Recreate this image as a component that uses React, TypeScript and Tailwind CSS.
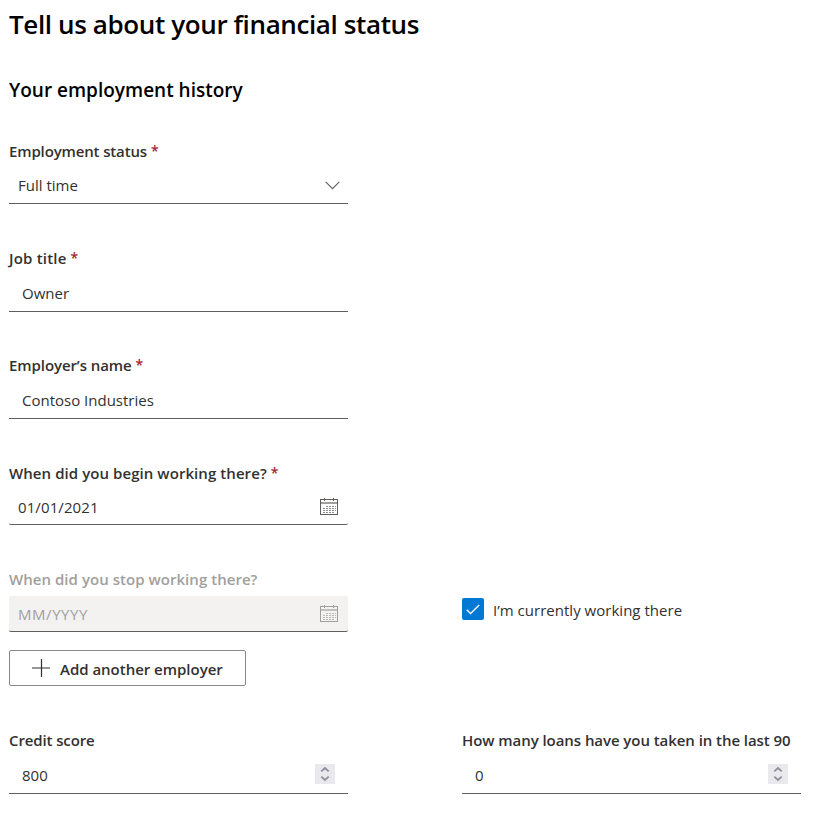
import React from "react";

function Label({ children, required, muted, className = "" }: { children: React.ReactNode; required?: boolean; muted?: boolean; className?: string }) {
  return (
    <div className={`flex h-5 items-center whitespace-nowrap text-[15px] leading-5 font-semibold ${muted ? "text-[#a19f9d]" : "text-[#323130]"}`}>
      <span className={className}>{children}</span>
      {required && <span className="ml-1 text-[14px] text-[#a4262c]">*</span>}
    </div>
  );
}

function Field({ children, className = "", text = "" }: { children: React.ReactNode; className?: string; text?: string }) {
  return (
    <div className={`flex w-[339px] items-center justify-between border-b border-[#605e5c] text-[15px] leading-5 text-[#323130] ${className}`}>
      {React.Children.map(children, (child, i) => (i === 0 ? <span className={`whitespace-nowrap ${text}`}>{child}</span> : child))}
    </div>
  );
}

function Calendar({ color }: { color: string }) {
  return (
    <svg width="20" height="18" viewBox="0 0 20 18" fill="none" stroke={color} shapeRendering="crispEdges">
      <rect x="1.5" y="1.5" width="17" height="15" />
      <path d="M1 4.5H19M1 5.5H19" strokeOpacity=".6" />
      <path d="M5.5 0V3M14.5 0V3" />
      <path d="M7 8.5H9M10 8.5H12M13 8.5H15M16 8.5H17M4 10.5H6M7 10.5H9M10 10.5H12M13 10.5H15M16 10.5H17M4 12.5H6M7 12.5H9M10 12.5H12M13 12.5H15M16 12.5H17M4 14.5H6M7 14.5H9M10 14.5H12M13 14.5H15" strokeOpacity=".7" />
    </svg>
  );
}

function Spinner() {
  return (
    <span className="flex h-5 w-5 items-center justify-center bg-[#e9e9ed]">
      <svg width="20" height="20" viewBox="0 0 20 20" fill="none" stroke="#8f8f9d" strokeWidth="1.8">
        <path d="M6.3 7.4L10 4L13.7 7.4M6.3 12.6L10 16L13.7 12.6" />
      </svg>
    </span>
  );
}

export default function App() {
  return (
    <main className="h-[813px] w-[827px] overflow-hidden bg-white pl-[9px] font-['Open_Sans','Noto_Sans',sans-serif] text-[#323130]">
      <h1 className="h-12 whitespace-nowrap text-[26px] leading-12 font-semibold text-black">
        <span className="tracking-[-0.38px]">Tell us about your financial status</span>
      </h1>
      <h2 className="mt-7 h-7 whitespace-nowrap text-[19px] leading-7 font-semibold text-black">Your employment history</h2>

      <section className="mt-[37px]">
        <Label required className="tracking-[-0.14px]">Employment status</Label>
        <Field className="mt-[7px] h-9 pr-2 pb-px pl-[9px]">
          Full time
          <svg className="mt-px" width="15" height="9" viewBox="0 0 15 9" fill="none" stroke="#605e5c" strokeWidth="1.1">
            <path d="M0.7 0.9L7.5 7.7L14.3 0.9" />
          </svg>
        </Field>
      </section>

      <section className="mt-11">
        <Label required className="tracking-[0.2px]">Job title</Label>
        <Field className="mt-2 h-9 pb-[2px] pl-[13px]">Owner</Field>
      </section>

      <section className="mt-[43px]">
        <Label required className="tracking-[-0.08px]">Employer’s name</Label>
        <Field className="mt-2 h-9 pb-[2px] pl-[13px]">Contoso Industries</Field>
      </section>

      <section className="mt-11">
        <Label required className="tracking-[0.07px]">When did you begin working there?</Label>
        <Field className="mt-[6px] h-9 rounded-[2px] pr-[9px] pl-[9px]" text="tracking-[0.1px]">
          01/01/2021
          <Calendar color="#605e5c" />
        </Field>
      </section>

      <section className="mt-11 flex">
        <div className="w-[453px]">
          <Label muted className="tracking-[0.04px]">When did you stop working there?</Label>
          <Field className="mt-[7px] h-9 rounded-[2px] bg-[#f3f2f1] pr-[9px] pl-[9px]" text="tracking-[0.55px]">
            <span className="text-[#a19f9d]">MM/YYYY</span>
            <Calendar color="#a19f9d" />
          </Field>
        </div>
        <label className="mt-[29px] flex h-[22px] items-center text-[15px] leading-[22px] whitespace-nowrap">
          <span className="flex h-[22px] w-[22px] items-center justify-center rounded-[2px] bg-[#0078d4]">
            <svg width="14" height="11" viewBox="0 0 14 11" fill="none" stroke="white" strokeWidth="1.3">
              <path d="M0.7 5.7L4.6 9.5L13.2 1" />
            </svg>
          </span>
          <span className="mt-[2px] ml-[9px] tracking-[0.02px]">I’m currently working there</span>
        </label>
      </section>

      <button className="mt-[18px] flex h-9 w-[237px] items-center rounded-[2px] border border-[#8a8886] pl-[22px] text-[15px] leading-5 font-semibold whitespace-nowrap">
        <svg width="18" height="18" viewBox="0 0 18 18" fill="none" stroke="#323130">
          <path d="M0 9H18M9.5 0V18" strokeWidth="1.2" />
        </svg>
        <span className="mt-[2px] ml-[10px] tracking-[-0.02px]">Add another employer</span>
      </button>

      <div className="mt-11 flex">
        <div className="w-[453px]">
          <Label className="tracking-[-0.12px]">Credit score</Label>
          <Field className="mt-2 h-9 pr-[13px] pb-[3px] pl-[13px]" text="mt-[2px]">800<Spinner /></Field>
        </div>
        <div>
          <Label className="tracking-[-0.06px]">How many loans have you taken in the last 90</Label>
          <Field className="mt-2 h-9 pr-[13px] pb-[3px] pl-[13px]" text="mt-[2px]">0<Spinner /></Field>
        </div>
      </div>
    </main>
  );
}
